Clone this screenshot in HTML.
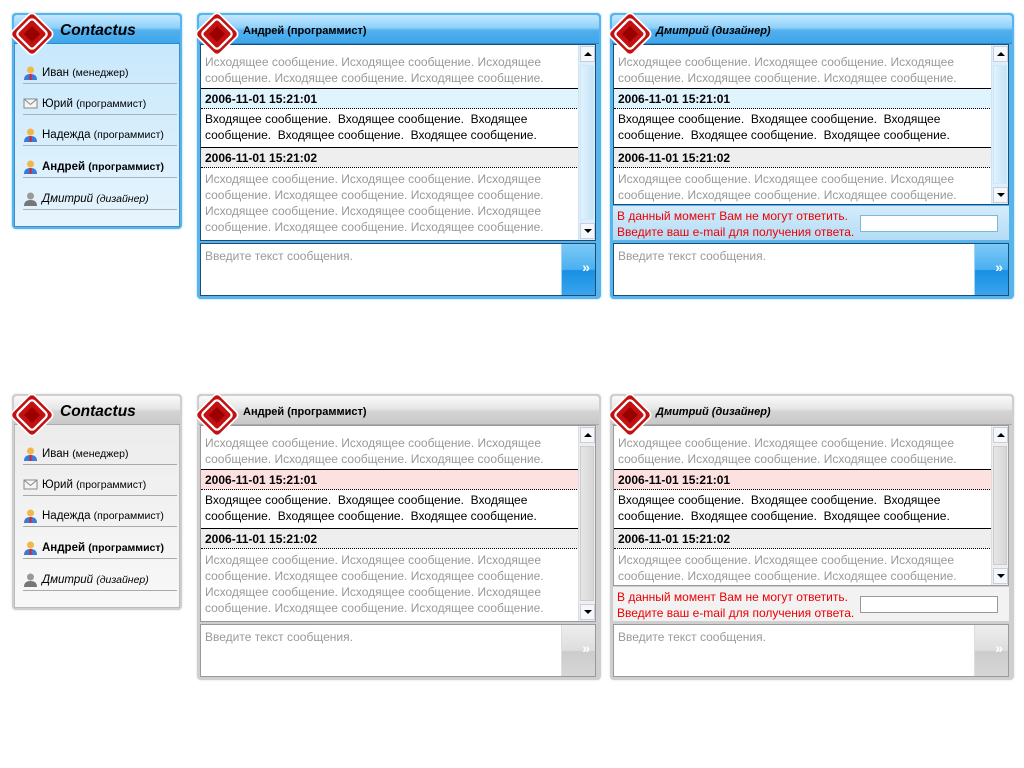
<!DOCTYPE html>
<html><head><meta charset="utf-8"><style>
*{box-sizing:border-box;margin:0;padding:0}
body{width:1024px;height:768px;background:#fff;position:relative;overflow:hidden;font-family:"Liberation Sans",Arial,sans-serif;font-size:12px}
.p{position:absolute;border-radius:4px;background:#58b4ea;box-shadow:0 0 2px #8fcdf3}
.g .p,.p.g{background:#cfcfcf;box-shadow:0 0 2px #ddd}
.hd{position:absolute;left:2px;right:2px;top:2px;height:29px;border-radius:3px 3px 0 0;background:linear-gradient(#c4e8fd,#8fd0fa 45%,#52b0ee 55%,#3da6ea);border-bottom:1px solid #2f86c8}
.g .hd{background:linear-gradient(#fafafa,#e6e6e6 45%,#d4d4d4 55%,#c8c8c8);border-bottom:1px solid #aaa}
.hd span{position:absolute;left:44px;top:10px;font-weight:bold;font-size:11px;color:#000}
.logo{position:absolute;left:-5px;top:-4px;width:50px;height:50px}
.cl{position:absolute;left:2px;right:2px;top:31px;bottom:2px;background:linear-gradient(#c8e8fc,#e6f4fd);border:1px solid #3b8fcc;border-top:none}
.g .cl{background:linear-gradient(#ececec,#f8f8f8);border-color:#bbb}
.row{position:absolute;left:8px;width:154px;height:31px;border-bottom:1px solid #a8b4bc;color:#000}
.g .row{border-color:#aaa}
.row i{position:absolute;left:0;top:12px;width:15px;height:15px}
.row b,.row em,.row span{position:absolute;left:19px;top:14px;font-size:11.5px;white-space:nowrap}
.row small{font-size:10.5px}
.m{position:absolute;left:3px;top:31px;width:396px;background:#fff;border:1px solid #1a4e78;overflow:hidden}
.g .m{border-color:#999}
.out{color:#999;line-height:16px;padding:9px 0 0 4px;height:43px;font-size:12px}
.dt{border-top:1px solid #000;border-bottom:1px dotted #000;height:21px;background:#dff4fd;font-weight:bold;padding:2px 4px;line-height:16px}
.g .dt.a{background:#fde0e0}
.dt.b{background:#eee}
.in{line-height:16px;padding:2px 0 0 4px;height:38px;color:#000}
.out2{color:#999;line-height:16px;padding:3px 0 0 4px}
.sb{position:absolute;right:0;top:0;bottom:0;width:17px;background:#dceffc;border-left:1px solid #d0e4f0}
.g .sb{background:#eee;border-color:#ddd}
.sb .th{position:absolute;left:1px;right:1px;top:20px;bottom:20px;background:linear-gradient(90deg,#e2f2fd,#c4e4f8);border:1px solid #cfe8f8}
.g .sb .th{background:linear-gradient(90deg,#e6e6e6,#d6d6d6);border-color:#ccc}
.sb .u,.sb .d{position:absolute;left:1px;width:15px;height:16px;background:#f4f8fb;border:1px solid #ccd}
.sb .u{top:1px}.sb .d{bottom:1px}
.sb .u:after,.sb .d:after{content:"";position:absolute;left:3px;border-left:4px solid transparent;border-right:4px solid transparent}
.sb .u:after{top:5px;border-bottom:4px solid #000}
.sb .d:after{top:5px;border-top:4px solid #000}
.ip{position:absolute;left:3px;top:230px;width:396px;height:53px;background:#fff;border:1px solid #1a4e78;color:#999;padding:5px 4px}
.g .ip{border-color:#999}
.btn{position:absolute;right:0;top:0;bottom:0;width:34px;background:linear-gradient(#7ccaf6,#4ab0f0 50%,#1890e4 52%,#3aa4ec);border-left:1px solid #a0d4f4;color:#fff;font-weight:bold;font-size:14px;text-align:right;padding:15px 5px 0 0}
.g .btn{background:linear-gradient(#eee,#ddd 50%,#ccc 52%,#d6d6d6);border-color:#ddd}
.nt{position:absolute;left:3px;top:193px;width:396px;height:34px;background:linear-gradient(#d4ecfb,#b4dcf6);color:#e00;line-height:16px;padding:2px 4px}
.g .nt{background:#f2f2f2}
.nt div{position:absolute;right:11px;top:9px;width:138px;height:17px;background:#fff;border:1px solid #7ab8e0}
.g .nt div{border-color:#999}
</style></head><body>
<svg width="0" height="0" style="position:absolute"><defs>
<g id="lg"><g transform="rotate(-45 22 22)"><rect x="8" y="8" width="28" height="28" rx="4" fill="#c41010" stroke="#fff" stroke-width="1.5"/><rect x="12" y="12" width="20" height="20" rx="3" fill="none" stroke="#fff" stroke-width="2"/><rect x="17" y="17" width="10" height="10" fill="#900"/></g></g>
<g id="pr"><circle cx="7.5" cy="5" r="3.5" fill="#f2b64a"/><path d="M1 15 Q1 9 7.5 9 Q14 9 14 15Z" fill="#3a7ad8"/><rect x="6.5" y="9" width="2" height="6" fill="#d22"/></g>
<g id="pg"><circle cx="7.5" cy="5" r="3.5" fill="#999"/><path d="M1 15 Q1 9 7.5 9 Q14 9 14 15Z" fill="#777"/></g>
<g id="ml"><rect x="1" y="3" width="13" height="9" fill="#f4f4f4" stroke="#888"/><path d="M1 3 L7.5 8.5 L14 3" fill="none" stroke="#888"/></g>
</defs></svg>

<div id="top">
<div class="p" style="left:12px;top:13px;width:170px;height:216px">
<div class="hd"><span style="left:46px;top:7px;font-size:15.5px;font-style:italic">Contactus</span></div>
<div class="cl">
<div class="row" style="top:9px"><i><svg width="15" height="15"><use href="#pr"/></svg></i><span>Иван <small>(менеджер)</small></span></div>
<div class="row" style="top:40px"><i><svg width="15" height="15"><use href="#ml"/></svg></i><span>Юрий <small>(программист)</small></span></div>
<div class="row" style="top:71px"><i><svg width="15" height="15"><use href="#pr"/></svg></i><span>Надежда <small>(программист)</small></span></div>
<div class="row" style="top:103px"><i><svg width="15" height="15"><use href="#pr"/></svg></i><b>Андрей <small>(программист)</small></b></div>
<div class="row" style="top:135px"><i><svg width="15" height="15"><use href="#pg"/></svg></i><em>Дмитрий <small>(дизайнер)</small></em></div>
</div>
<svg class="logo" viewBox="0 0 44 44"><use href="#lg"/></svg>
</div>

<div class="p" style="left:197px;top:13px;width:404px;height:286px">
<div class="hd"><span>Андрей (программист)</span></div>
<div class="m" style="height:197px">
<div class="out">Исходящее сообщение. Исходящее сообщение. Исходящее<br>сообщение. Исходящее сообщение. Исходящее сообщение.</div>
<div class="dt a">2006-11-01 15:21:01</div>
<div class="in">Входящее сообщение.&nbsp; Входящее сообщение.&nbsp; Входящее<br>сообщение.&nbsp; Входящее сообщение.&nbsp; Входящее сообщение.</div>
<div class="dt b">2006-11-01 15:21:02</div>
<div class="out2">Исходящее сообщение. Исходящее сообщение. Исходящее<br>сообщение. Исходящее сообщение. Исходящее сообщение.<br>Исходящее сообщение. Исходящее сообщение. Исходящее<br>сообщение. Исходящее сообщение. Исходящее сообщение.</div>
<div class="sb"><div class="th"></div><div class="u"></div><div class="d"></div></div>
</div>
<div class="ip">Введите текст сообщения.<div class="btn">»</div></div>
<svg class="logo" viewBox="0 0 44 44"><use href="#lg"/></svg>
</div>

<div class="p" style="left:610px;top:13px;width:404px;height:286px">
<div class="hd"><span style="font-style:italic">Дмитрий (дизайнер)</span></div>
<div class="m" style="height:161px">
<div class="out">Исходящее сообщение. Исходящее сообщение. Исходящее<br>сообщение. Исходящее сообщение. Исходящее сообщение.</div>
<div class="dt a">2006-11-01 15:21:01</div>
<div class="in">Входящее сообщение.&nbsp; Входящее сообщение.&nbsp; Входящее<br>сообщение.&nbsp; Входящее сообщение.&nbsp; Входящее сообщение.</div>
<div class="dt b">2006-11-01 15:21:02</div>
<div class="out2">Исходящее сообщение. Исходящее сообщение. Исходящее<br>сообщение. Исходящее сообщение. Исходящее сообщение.<br>Исходящее сообщение. Исходящее сообщение. Исходящее</div>
<div class="sb"><div class="th"></div><div class="u"></div><div class="d"></div></div>
</div>
<div class="nt">В данный момент Вам не могут ответить.<br>Введите ваш e-mail для получения ответа.<div></div></div>
<div class="ip">Введите текст сообщения.<div class="btn">»</div></div>
<svg class="logo" viewBox="0 0 44 44"><use href="#lg"/></svg>
</div>
</div>

<div class="g" style="position:absolute;left:0;top:381px;width:1024px;height:300px">
<div class="p" style="left:12px;top:13px;width:170px;height:216px">
<div class="hd"><span style="left:46px;top:7px;font-size:15.5px;font-style:italic">Contactus</span></div>
<div class="cl">
<div class="row" style="top:9px"><i><svg width="15" height="15"><use href="#pr"/></svg></i><span>Иван <small>(менеджер)</small></span></div>
<div class="row" style="top:40px"><i><svg width="15" height="15"><use href="#ml"/></svg></i><span>Юрий <small>(программист)</small></span></div>
<div class="row" style="top:71px"><i><svg width="15" height="15"><use href="#pr"/></svg></i><span>Надежда <small>(программист)</small></span></div>
<div class="row" style="top:103px"><i><svg width="15" height="15"><use href="#pr"/></svg></i><b>Андрей <small>(программист)</small></b></div>
<div class="row" style="top:135px"><i><svg width="15" height="15"><use href="#pg"/></svg></i><em>Дмитрий <small>(дизайнер)</small></em></div>
</div>
<svg class="logo" viewBox="0 0 44 44"><use href="#lg"/></svg>
</div>

<div class="p" style="left:197px;top:13px;width:404px;height:286px">
<div class="hd"><span>Андрей (программист)</span></div>
<div class="m" style="height:197px">
<div class="out">Исходящее сообщение. Исходящее сообщение. Исходящее<br>сообщение. Исходящее сообщение. Исходящее сообщение.</div>
<div class="dt a">2006-11-01 15:21:01</div>
<div class="in">Входящее сообщение.&nbsp; Входящее сообщение.&nbsp; Входящее<br>сообщение.&nbsp; Входящее сообщение.&nbsp; Входящее сообщение.</div>
<div class="dt b">2006-11-01 15:21:02</div>
<div class="out2">Исходящее сообщение. Исходящее сообщение. Исходящее<br>сообщение. Исходящее сообщение. Исходящее сообщение.<br>Исходящее сообщение. Исходящее сообщение. Исходящее<br>сообщение. Исходящее сообщение. Исходящее сообщение.</div>
<div class="sb"><div class="th"></div><div class="u"></div><div class="d"></div></div>
</div>
<div class="ip">Введите текст сообщения.<div class="btn">»</div></div>
<svg class="logo" viewBox="0 0 44 44"><use href="#lg"/></svg>
</div>

<div class="p" style="left:610px;top:13px;width:404px;height:286px">
<div class="hd"><span style="font-style:italic">Дмитрий (дизайнер)</span></div>
<div class="m" style="height:161px">
<div class="out">Исходящее сообщение. Исходящее сообщение. Исходящее<br>сообщение. Исходящее сообщение. Исходящее сообщение.</div>
<div class="dt a">2006-11-01 15:21:01</div>
<div class="in">Входящее сообщение.&nbsp; Входящее сообщение.&nbsp; Входящее<br>сообщение.&nbsp; Входящее сообщение.&nbsp; Входящее сообщение.</div>
<div class="dt b">2006-11-01 15:21:02</div>
<div class="out2">Исходящее сообщение. Исходящее сообщение. Исходящее<br>сообщение. Исходящее сообщение. Исходящее сообщение.<br>Исходящее сообщение. Исходящее сообщение. Исходящее</div>
<div class="sb"><div class="th"></div><div class="u"></div><div class="d"></div></div>
</div>
<div class="nt">В данный момент Вам не могут ответить.<br>Введите ваш e-mail для получения ответа.<div></div></div>
<div class="ip">Введите текст сообщения.<div class="btn">»</div></div>
<svg class="logo" viewBox="0 0 44 44"><use href="#lg"/></svg>
</div>
</div>
</body></html>
